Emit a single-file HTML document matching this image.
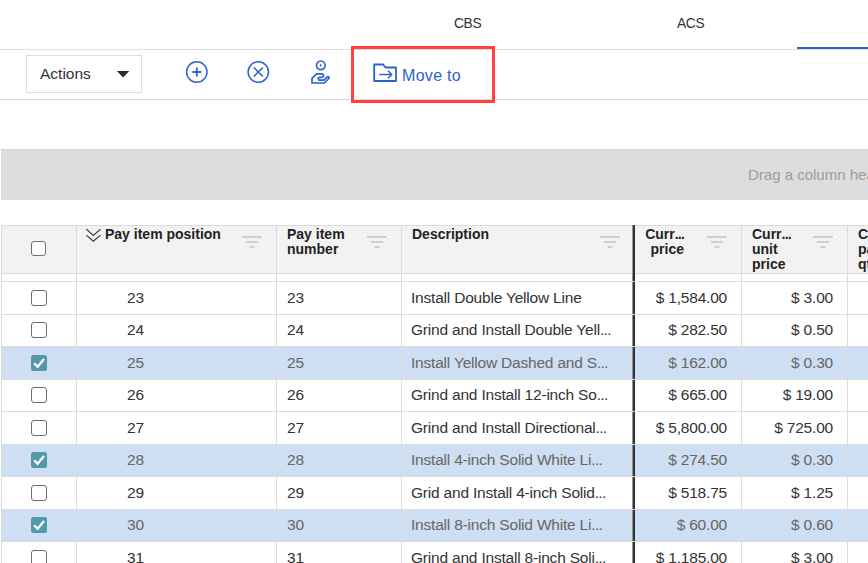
<!DOCTYPE html>
<html><head><meta charset="utf-8"><title>Pay items</title><style>
*{margin:0;padding:0;box-sizing:border-box}
html,body{width:868px;height:563px;overflow:hidden;background:#fff}
body{position:relative;font-family:"Liberation Sans",sans-serif;color:#333}
.a{position:absolute;white-space:nowrap}
.t15{font-size:15px;line-height:17px}
.r{font-size:15.5px;line-height:17px;letter-spacing:-0.2px}
.e{letter-spacing:-0.7px}
.hb{font-size:14px;line-height:15px;font-weight:bold;color:#222}
.hl{position:absolute;height:1px;background:#dcdcdc;z-index:2}
.vl{position:absolute;width:1px;background:#dcdcdc;z-index:2}
.cb{position:absolute;left:31px;width:16px;height:16px;border:1.6px solid #6e6e6e;border-radius:3px;background:#fff}
.cbc{position:absolute;left:31px;width:16px;height:16px;border-radius:2.5px;background:#5399a8}
.sel{color:#666}
</style></head><body>
<div class="a" style="left:454px;top:14px;font-size:15.5px;line-height:18px;letter-spacing:-0.4px;transform:scaleX(0.89);transform-origin:0 0;color:#333">CBS</div>
<div class="a" style="left:677px;top:14px;font-size:15.5px;line-height:18px;letter-spacing:-0.4px;transform:scaleX(0.89);transform-origin:0 0;color:#333">ACS</div>
<div class="hl" style="left:0;top:49px;width:868px;background:#dedede"></div>
<div class="a" style="left:797px;top:47px;width:71px;height:2px;background:#2c62cc"></div>
<div class="hl" style="left:0;top:99px;width:868px;background:#dadada"></div>
<div class="a" style="left:26px;top:55px;width:116px;height:38px;border:1px solid #dedede"></div>
<div class="a" style="left:40px;top:65px;font-size:15.5px;line-height:17px;color:#333">Actions</div>
<svg class="a" style="left:116px;top:70px" width="15" height="9" viewBox="0 0 15 9"><path d="M0.9 0.9H13.3L7.1 7.6Z" fill="#2b2b2b"/></svg>
<svg class="a" style="left:184px;top:60px" width="26" height="26" viewBox="0 0 26 26" fill="none" stroke="#2c62cc" stroke-width="1.6"><circle cx="12.8" cy="12" r="10.2" stroke-width="1.5"/><path d="M8.3 12H17.3M12.8 7.5V16.5" stroke-width="1.8"/></svg>
<svg class="a" style="left:245px;top:60px" width="26" height="26" viewBox="0 0 26 26" fill="none" stroke="#2c62cc" stroke-width="1.6"><circle cx="13.3" cy="12" r="10.2" stroke-width="1.5"/><path d="M8.8 7.5L17.8 16.5M17.8 7.5L8.8 16.5" stroke-width="1.6"/></svg>
<svg class="a" style="left:304px;top:56px" width="32" height="32" viewBox="0 0 32 32" fill="none" stroke="#2c62cc" stroke-width="1.7" stroke-linejoin="round"><circle cx="16.8" cy="9.3" r="4.3"/><path d="M16.6 8.2V10.6" stroke-width="1.5"/><path d="M8 27V22.4L12.6 17.9H17.8A1.75 1.75 0 0 1 17.8 21.4H15.6A1.4 1.4 0 0 0 15.6 24.2H20L23.2 20.9A1.1 1.1 0 0 1 24.8 22.5L20.4 27Z"/></svg>
<div class="a" style="left:351px;top:46px;width:144px;height:57px;border:3px solid #ff4141;z-index:5"></div>
<svg class="a" style="left:370px;top:60px" width="30" height="26" viewBox="0 0 30 26" fill="none" stroke="#2c62cc" stroke-width="1.8" stroke-linejoin="round"><path d="M4.2 4.5H13.2L15.5 7.5H26V21H4.2Z"/><path d="M9.2 14.5H21.5M18 10.7L21.8 14.5L18 18.3" stroke-width="1.5"/></svg>
<div class="a" style="left:402px;top:67px;font-size:16px;line-height:18px;letter-spacing:0.3px;color:#2c62cc">Move to</div>
<div class="a" style="left:1px;top:149px;width:867px;height:51px;background:#dddddd;border-top:1px solid #d6d6d6;border-left:1px solid #d6d6d6"></div>
<div class="a" style="left:0;top:149px;width:1px;height:1px;background:#d6d6d6"></div>
<div class="a t15" style="left:748px;top:166px;color:#9c9c9c">Drag a column header here to group by that column</div>
<div class="a" style="left:1px;top:225px;width:867px;height:49px;background:#f2f2f2;border-top:1px solid #dcdcdc;border-bottom:1px solid #dcdcdc"></div>
<div class="hl" style="left:1px;top:281px;width:867px"></div>
<div class="cb" style="top:241px;left:31px;width:15px;height:15px"></div>
<svg class="a" style="left:82px;top:224px" width="24" height="22" viewBox="0 0 24 22" fill="none" stroke="#333" stroke-width="1.15"><path d="M4.3 5.1L11.3 11.4L18.5 5.1M4.3 11.1L11.3 17.3L18.5 11.1"/></svg>
<div class="a hb" style="left:105px;top:227px">Pay item position</div>
<div class="a hb" style="left:287px;top:227px">Pay item<br>number</div>
<div class="a hb" style="left:412px;top:227px">Description</div>
<div class="a hb" style="left:645px;top:227px;text-align:right;width:39px">Curr<span style="letter-spacing:-0.8px">...</span><br>price</div>
<div class="a hb" style="left:752px;top:227px">Curr<span style="letter-spacing:-0.8px">...</span><br>unit<br>price</div>
<div class="a hb" style="left:858px;top:227px">Curr<br>pay<br>qty</div>
<svg class="a" style="left:242px;top:235px" width="26" height="14" viewBox="0 0 26 14"><rect x="0" y="1" width="20" height="2" fill="#cfcfcf"/><rect x="20" y="1" width="4" height="2" fill="#fafafa"/><rect x="4" y="6" width="12" height="2" fill="#cfcfcf"/><rect x="7.5" y="11" width="5" height="2" fill="#cfcfcf"/></svg>
<svg class="a" style="left:367px;top:235px" width="26" height="14" viewBox="0 0 26 14"><rect x="0" y="1" width="20" height="2" fill="#cfcfcf"/><rect x="20" y="1" width="4" height="2" fill="#fafafa"/><rect x="4" y="6" width="12" height="2" fill="#cfcfcf"/><rect x="7.5" y="11" width="5" height="2" fill="#cfcfcf"/></svg>
<svg class="a" style="left:600px;top:235px" width="26" height="14" viewBox="0 0 26 14"><rect x="0" y="1" width="20" height="2" fill="#cfcfcf"/><rect x="20" y="1" width="4" height="2" fill="#fafafa"/><rect x="4" y="6" width="12" height="2" fill="#cfcfcf"/><rect x="7.5" y="11" width="5" height="2" fill="#cfcfcf"/></svg>
<svg class="a" style="left:707px;top:235px" width="26" height="14" viewBox="0 0 26 14"><rect x="0" y="1" width="20" height="2" fill="#cfcfcf"/><rect x="20" y="1" width="4" height="2" fill="#fafafa"/><rect x="4" y="6" width="12" height="2" fill="#cfcfcf"/><rect x="7.5" y="11" width="5" height="2" fill="#cfcfcf"/></svg>
<svg class="a" style="left:813px;top:235px" width="26" height="14" viewBox="0 0 26 14"><rect x="0" y="1" width="20" height="2" fill="#cfcfcf"/><rect x="20" y="1" width="4" height="2" fill="#fafafa"/><rect x="4" y="6" width="12" height="2" fill="#cfcfcf"/><rect x="7.5" y="11" width="5" height="2" fill="#cfcfcf"/></svg>
<div class="vl" style="left:1px;top:225px;height:338px"></div>
<div class="vl" style="left:76px;top:225px;height:338px"></div>
<div class="vl" style="left:276px;top:225px;height:338px"></div>
<div class="vl" style="left:401px;top:225px;height:338px"></div>
<div class="vl" style="left:741px;top:225px;height:338px"></div>
<div class="vl" style="left:847px;top:225px;height:338px"></div>
<div class="hl" style="left:1px;top:314px;width:867px"></div>
<div class="cb" style="top:290px"></div>
<div class="a r" style="left:127px;top:289px">23</div>
<div class="a r" style="left:287px;top:289px">23</div>
<div class="a r" style="left:411px;top:289px">Install Double Yellow Line</div>
<div class="a r" style="left:635px;width:92px;text-align:right;top:289px">$ 1,584.00</div>
<div class="a r" style="left:742px;width:91px;text-align:right;top:289px">$ 3.00</div>
<div class="hl" style="left:1px;top:346px;width:867px"></div>
<div class="cb" style="top:322px"></div>
<div class="a r" style="left:127px;top:321px">24</div>
<div class="a r" style="left:287px;top:321px">24</div>
<div class="a r" style="left:411px;top:321px">Grind and Install Double Yell<span class="e">...</span></div>
<div class="a r" style="left:635px;width:92px;text-align:right;top:321px">$ 282.50</div>
<div class="a r" style="left:742px;width:91px;text-align:right;top:321px">$ 0.50</div>
<div class="a" style="left:2px;top:347px;width:866px;height:32px;background:#cedff3"></div>
<div class="hl" style="left:1px;top:379px;width:867px"></div>
<div class="cbc" style="top:355px"><svg width="16" height="16" viewBox="0 0 16 16" style="display:block"><path d="M3.2 8.3L6.6 11.7L13 4" fill="none" stroke="#fff" stroke-width="2.3"/></svg></div>
<div class="a r sel" style="left:127px;top:354px">25</div>
<div class="a r sel" style="left:287px;top:354px">25</div>
<div class="a r sel" style="left:411px;top:354px">Install Yellow Dashed and S<span class="e">...</span></div>
<div class="a r sel" style="left:635px;width:92px;text-align:right;top:354px">$ 162.00</div>
<div class="a r sel" style="left:742px;width:91px;text-align:right;top:354px">$ 0.30</div>
<div class="hl" style="left:1px;top:411px;width:867px"></div>
<div class="cb" style="top:387px"></div>
<div class="a r" style="left:127px;top:386px">26</div>
<div class="a r" style="left:287px;top:386px">26</div>
<div class="a r" style="left:411px;top:386px">Grind and Install 12-inch So<span class="e">...</span></div>
<div class="a r" style="left:635px;width:92px;text-align:right;top:386px">$ 665.00</div>
<div class="a r" style="left:742px;width:91px;text-align:right;top:386px">$ 19.00</div>
<div class="hl" style="left:1px;top:444px;width:867px"></div>
<div class="cb" style="top:420px"></div>
<div class="a r" style="left:127px;top:419px">27</div>
<div class="a r" style="left:287px;top:419px">27</div>
<div class="a r" style="left:411px;top:419px">Grind and Install Directional<span class="e">...</span></div>
<div class="a r" style="left:635px;width:92px;text-align:right;top:419px">$ 5,800.00</div>
<div class="a r" style="left:742px;width:91px;text-align:right;top:419px">$ 725.00</div>
<div class="a" style="left:2px;top:445px;width:866px;height:31px;background:#cedff3"></div>
<div class="hl" style="left:1px;top:476px;width:867px"></div>
<div class="cbc" style="top:452px"><svg width="16" height="16" viewBox="0 0 16 16" style="display:block"><path d="M3.2 8.3L6.6 11.7L13 4" fill="none" stroke="#fff" stroke-width="2.3"/></svg></div>
<div class="a r sel" style="left:127px;top:451px">28</div>
<div class="a r sel" style="left:287px;top:451px">28</div>
<div class="a r sel" style="left:411px;top:451px">Install 4-inch Solid White Li<span class="e">...</span></div>
<div class="a r sel" style="left:635px;width:92px;text-align:right;top:451px">$ 274.50</div>
<div class="a r sel" style="left:742px;width:91px;text-align:right;top:451px">$ 0.30</div>
<div class="hl" style="left:1px;top:509px;width:867px"></div>
<div class="cb" style="top:485px"></div>
<div class="a r" style="left:127px;top:484px">29</div>
<div class="a r" style="left:287px;top:484px">29</div>
<div class="a r" style="left:411px;top:484px">Grid and Install 4-inch Solid<span class="e">...</span></div>
<div class="a r" style="left:635px;width:92px;text-align:right;top:484px">$ 518.75</div>
<div class="a r" style="left:742px;width:91px;text-align:right;top:484px">$ 1.25</div>
<div class="a" style="left:2px;top:510px;width:866px;height:31px;background:#cedff3"></div>
<div class="hl" style="left:1px;top:541px;width:867px"></div>
<div class="cbc" style="top:517px"><svg width="16" height="16" viewBox="0 0 16 16" style="display:block"><path d="M3.2 8.3L6.6 11.7L13 4" fill="none" stroke="#fff" stroke-width="2.3"/></svg></div>
<div class="a r sel" style="left:127px;top:516px">30</div>
<div class="a r sel" style="left:287px;top:516px">30</div>
<div class="a r sel" style="left:411px;top:516px">Install 8-inch Solid White Li<span class="e">...</span></div>
<div class="a r sel" style="left:635px;width:92px;text-align:right;top:516px">$ 60.00</div>
<div class="a r sel" style="left:742px;width:91px;text-align:right;top:516px">$ 0.60</div>
<div class="hl" style="left:1px;top:574px;width:867px"></div>
<div class="cb" style="top:550px"></div>
<div class="a r" style="left:127px;top:549px">31</div>
<div class="a r" style="left:287px;top:549px">31</div>
<div class="a r" style="left:411px;top:549px">Grind and Install 8-inch Soli<span class="e">...</span></div>
<div class="a r" style="left:635px;width:92px;text-align:right;top:549px">$ 1,185.00</div>
<div class="a r" style="left:742px;width:91px;text-align:right;top:549px">$ 3.00</div>
<div class="a" style="left:632px;top:225px;width:3px;height:338px;background:linear-gradient(90deg,#939393 0,#939393 1px,#363636 1px,#363636 2px,#2d2d2d 2px)"></div>
</body></html>
